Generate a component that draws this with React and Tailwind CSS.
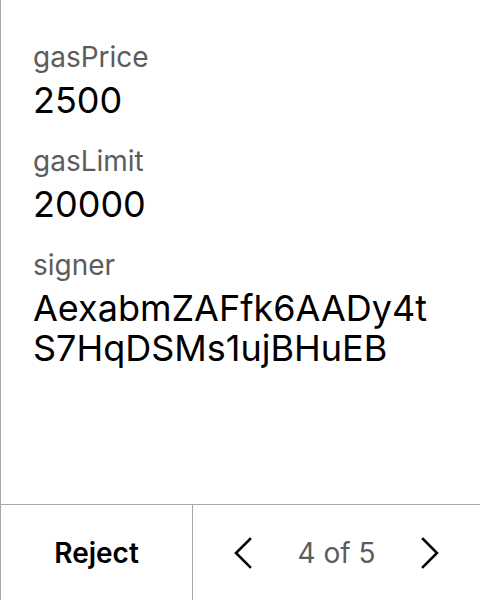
import React from "react";

const fields = [
  { label: "gasPrice", value: "2500" },
  { label: "gasLimit", value: "20000" },
  { label: "signer", value: "AexabmZAFfk6AADy4tS7HqDSMs1ujBHuEB" },
];

const Chevron = ({ dir }) => (
  <svg width="20" height="32" viewBox="0 0 20 32" fill="none" stroke="#000" strokeWidth="2.6" strokeLinecap="square">
    {dir === "left"
      ? <polyline points="17,2 3,16 17,30" />
      : <polyline points="3,2 17,16 3,30" />}
  </svg>
);

export default function App() {
  return (
    <div className="flex h-[600px] w-[480px] flex-col border-l border-[#a8a8a8] bg-white font-['Inter',sans-serif]">
      <div className="flex-1 pl-[32px] pr-[40px] pt-[40px]">
        {fields.map((f) => (
          <div key={f.label} className="mb-[24px]">
            <div className="text-[28px] leading-[34px] text-[#5c5c5c]">{f.label}</div>
            <div className="mt-[6px] break-all text-[36px] leading-[40px] text-black">{f.value}</div>
          </div>
        ))}
      </div>
      <div className="flex h-[96px] border-t border-[#a8a8a8]">
        <button className="flex w-[192px] items-center justify-center border-r border-[#a8a8a8] text-[28px] font-semibold text-black">
          Reject
        </button>
        <div className="flex flex-1 items-center justify-between px-[40px]">
          <Chevron dir="left" />
          <span className="text-[28px] text-[#5c5c5c]">4 of 5</span>
          <Chevron dir="right" />
        </div>
      </div>
    </div>
  );
}
